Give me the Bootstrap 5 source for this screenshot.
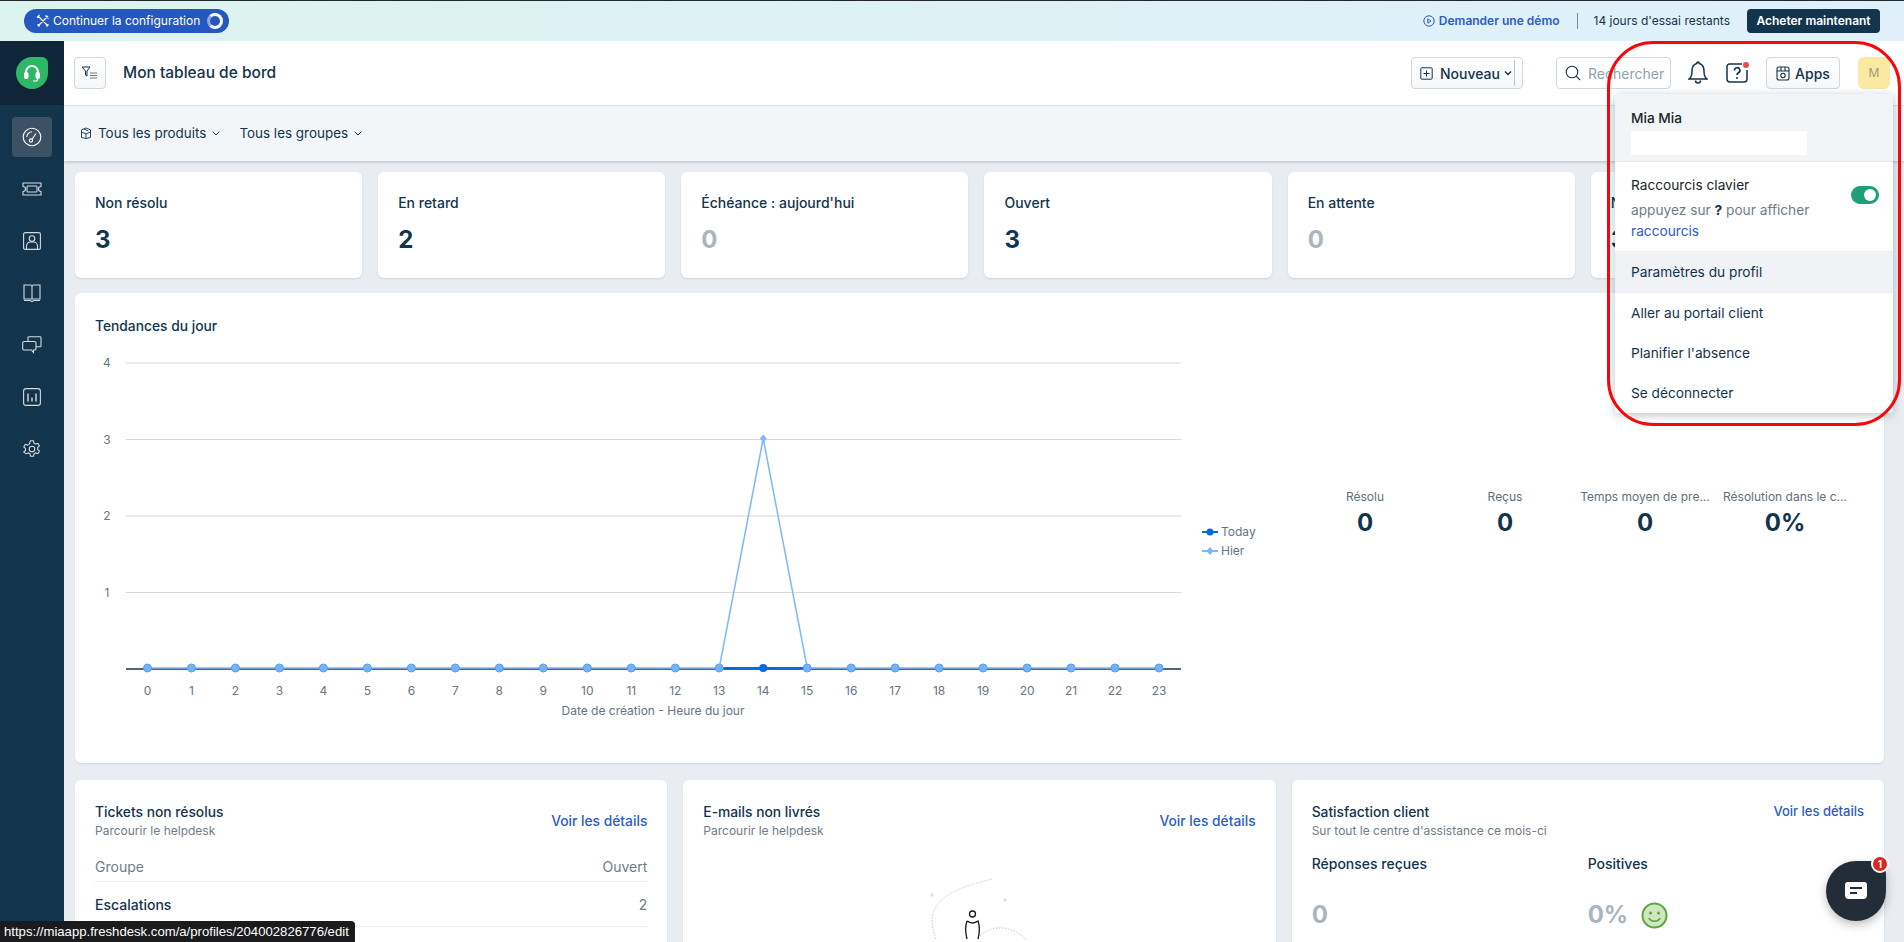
<!DOCTYPE html>
<html lang="fr">
<head>
    <meta charset="UTF-8">
    <title>Mon tableau de bord</title>
    <link href="https://cdn.jsdelivr.net/npm/bootstrap@5.3.3/dist/css/bootstrap.min.css" rel="stylesheet">
    <style>
        html, body { height: 942px; overflow: hidden; }
        body { font-family: Inter, "Liberation Sans", sans-serif; font-size: 14px; color: #12344d; background: #e9edf1; }

        /* bandeau d'essai */
        .trial-bar { height: 41px; border-top: 1px solid #23272b; background: linear-gradient(90deg, #dcf4ef, #dff0fb); padding: 0 24px; font-size: 12px; flex-shrink: 0; }
        .setup-pill { height: 24px; width: 205px; background: #2458bf; color: #fff; border-radius: 12px; padding-left: 12px; gap: 3px; }
        .setup-spin { width: 16px; height: 16px; border-radius: 50%; border: 3px solid #fff; border-left-color: #8fa9df; margin-left: 4px; }
        .demo-link { color: #2c5cc5; font-weight: 600; gap: 4px; text-decoration: none; }
        .trial-sep { width: 1px; height: 16px; background: #7b8a97; margin: 0 16px 0 17px; }
        .buy-btn { height: 24px; width: 133px; margin-left: 17px; padding: 0; background: #12344d; color: #fff; font-size: 12px; font-weight: 600; border-radius: 4px; border: 0; }

        /* barre laterale */
        .side-nav { width: 64px; background: #12344d; flex-shrink: 0; }
        .side-logo { height: 64px; background: #0f2538; }
        .logo-leaf { width: 32px; height: 32px; background: #2eb767; border-radius: 50% 6px 50% 50%; }
        .side-links { padding-top: 12px; gap: 12px; }
        .side-tile { width: 40px; height: 40px; border-radius: 4px; }
        .side-tile.on { background: #3b5166; }

        /* en-tete */
        .top-head { height: 65px; background: #fff; border-bottom: 1px solid #e4e9ee; padding: 0 14px 0 10px; flex-shrink: 0; }
        .ghost-btn { height: 32px; background: linear-gradient(#fff, #f5f7f9); border: 1px solid #cfd7df; border-radius: 4px; color: #12344d; }
        .filter-btn { width: 32px; }
        .page-title { font-size: 15.5px; font-weight: 500; margin: 1px 0 0 17px; }
        .new-btn { width: 112px; padding: 0 0 0 8px; gap: 7px; font-weight: 500; }
        .new-sep { width: 1px; height: 26px; background: #b9c4ce; margin-left: -5px; }
        .search-box { width: 115px; height: 32px; border: 1px solid #cfd7df; border-radius: 4px; margin-left: 33px; padding-left: 8px; gap: 7px; color: #92a2b1; background: #fff; }
        .help-dot { width: 6px; height: 6px; background: #ef4a4a; border-radius: 50%; position: absolute; top: 1px; right: 0; }
        .apps-btn { width: 74px; gap: 5px; font-weight: 500; margin-left: 17px; }
        .user-chip { width: 32px; height: 32px; background: #fbe9a3; color: #a19a78; font-size: 12px; border-radius: 6px; margin-left: 18px; }

        /* filtres */
        .filter-strip { height: 55px; background: #f3f6f9; box-shadow: 0 1px 3px rgba(18, 52, 77, .25); padding-left: 16px; flex-shrink: 0; position: relative; font-size: 13.45px; }
        .filter-pick { gap: 6px; }
        .filter-pick + .filter-pick { margin-left: 19px; }

        /* contenu */
        .dash-body { padding: 11px 20px 0 11px; overflow: hidden; flex: 1; min-height: 0; }
        .tiles-row { margin-right: -2px; }
        .tile-card, .chart-card, .panel-card { border: 0; border-radius: 6px; box-shadow: 0 1px 2px rgba(18, 52, 77, .12); }
        .tile-card { height: 106px; padding: 20px; }
        .tile-label { font-weight: 500; line-height: 22px; }
        .tile-num { font-size: 24px; font-weight: 700; line-height: 30px; margin-top: 11px; }
        .muted-num { color: #a9b5c0; }
        .chart-card { height: 470px; margin: 15px 0 17px; padding: 23px 20px 0; }
        .card-title-txt { font-weight: 500; line-height: 20px; font-size: 13.8px; margin: 0; }
        .chart-wrap { margin-top: 9px; }
        .chart-wrap text { font-family: Inter, "Liberation Sans", sans-serif; font-size: 12px; fill: #667581; }
        .stat-cell { width: 140px; text-align: center; padding-top: 152px; }
        .stat-name { font-size: 12px; color: #5f6f7c; line-height: 18px; white-space: nowrap; }
        .stat-val { font-size: 24px; font-weight: 700; line-height: 32px; margin-top: 1px; }
        .panel-card { height: 300px; padding: 21px 20px; }
        .panel-plain { padding-top: 22px; }
        .sub-txt { font-size: 12px; color: #6f7c87; line-height: 18px; }
        .see-link { color: #2c5cc5; font-weight: 500; text-decoration: none; font-size: 13.8px; }
        .panel-head { height: 40px; }
        .panel-row { height: 45px; border-bottom: 1px solid #ebeff3; color: #6f7c87; }
        .first-row { height: 31px; margin-top: 10px; }
        .row-name { color: #12344d; font-weight: 500; }
        .big-gray { font-size: 24px; font-weight: 700; color: #a9b5c0; line-height: 30px; }
        .csat-head { font-weight: 500; line-height: 21px; margin-top: 13px; }
        .csat-val { margin-top: 26px; gap: 13px; }
        .empty-art { display: block; margin: 34px auto 0; }

        /* menu du profil */
        .profile-menu { position: absolute; left: 1615px; top: 94px; width: 278px; padding: 0; margin: 0; border: 0; border-radius: 4px; font-size: 13.7px; box-shadow: 0 2px 10px rgba(18, 52, 77, .3); z-index: 20; overflow: visible; }
        .profile-menu::before { content: ""; position: absolute; top: -6px; right: 18px; border: 6px solid transparent; border-top: 0; border-bottom-color: #f1f5f8; }
        .menu-top { height: 68px; background: #f1f5f8; border-bottom: 1px solid #e4e9ee; padding: 13px 16px 0; border-radius: 4px 4px 0 0; }
        .menu-name { font-weight: 500; line-height: 22px; }
        .menu-mask { width: 176px; height: 24px; background: #fff; margin-top: 2px; }
        .menu-keys { height: 90px; padding: 13px 14px 0 16px; border-bottom: 1px solid #e9edf1; }
        .keys-note { color: #6f7c87; line-height: 21px; margin-top: 4px; width: 185px; }
        .keys-note b { color: #12344d; }
        .keys-note a { color: #2c5cc5; text-decoration: none; }
        .key-switch { margin: 11px 0 0; padding: 0; min-height: 0; }
        .key-switch .form-check-input { width: 28px; height: 18px; margin: 0; background-color: #1d9f78; border-color: #1d9f78; float: none; display: block; }
        .profile-menu .dropdown-item { height: 40px; line-height: 40px; padding: 0 16px; color: #12344d; }
        .profile-menu .dropdown-item.hovered { background: #f0f2f6; height: 41px; line-height: 41px; }

        .red-circle { position: absolute; left: 1607px; top: 41px; width: 294px; height: 385px; border: 3px solid #f5080c; border-radius: 46px; z-index: 30; pointer-events: none; }

        .chat-bubble { position: absolute; left: 1826px; top: 861px; width: 60px; height: 60px; background: #232d38; border-radius: 50% 14px 50% 50%; box-shadow: 0 4px 10px rgba(0, 0, 0, .25); z-index: 25; }
        .chat-count { position: absolute; right: -3px; top: -6px; width: 18px; height: 18px; border-radius: 50%; background: #e0241c; border: 2px solid #fff; color: #fff; font-size: 10px; font-weight: 700; line-height: 14px; text-align: center; }

        .status-link { position: absolute; left: 0; bottom: 0; height: 21px; width: 355px; background: #1b1b1d; color: #fff; font-family: "Liberation Sans", sans-serif; font-size: 13.15px; line-height: 21px; padding-left: 4px; border-radius: 0 4px 0 0; white-space: nowrap; z-index: 40; }
    </style>
</head>
<body>
    <div class="d-flex flex-column" style="height:942px">
        <!-- bandeau d'essai -->
        <div class="trial-bar d-flex align-items-center">
            <div class="setup-pill d-flex align-items-center">
                <svg width="14" height="14" viewBox="0 0 14 14" fill="none" stroke="#fff" stroke-width="1.2"><path d="M2 2l10 10M12 2L2 12M1 3.5L3.5 1M9.5 1.5l3 3M1.5 10.5l2 2M10.5 12.5l2-2"/></svg>
                <span>Continuer la configuration</span>
                <span class="setup-spin"></span>
            </div>
            <a href="#" class="demo-link d-flex align-items-center ms-auto">
                <svg width="12" height="12" viewBox="0 0 12 12" fill="none" stroke="#2c5cc5"><circle cx="6" cy="6" r="5.2"/><path d="M4.8 3.8L8 6 4.8 8.2z"/></svg>
                Demander une démo
            </a>
            <span class="trial-sep"></span>
            <span>14 jours d'essai restants</span>
            <button type="button" class="btn buy-btn">Acheter maintenant</button>
        </div>

        <div class="d-flex flex-grow-1" style="min-height:0">
            <!-- navigation -->
            <nav class="side-nav d-flex flex-column">
                <div class="side-logo d-flex align-items-center justify-content-center">
                    <span class="logo-leaf d-flex align-items-center justify-content-center">
                        <svg width="20" height="20" viewBox="0 0 20 20" fill="none" stroke="#fff" stroke-width="2"><path d="M4 12V9a6 6 0 0 1 12 0v3"/><rect x="3" y="10" width="2.5" height="5" rx="1" fill="#fff"/><rect x="14.5" y="10" width="2.5" height="5" rx="1" fill="#fff"/><path d="M15.5 15v1.5a1.5 1.5 0 0 1-1.5 1.5h-3" stroke-width="1.2"/></svg>
                    </span>
                </div>
                <div class="side-links d-flex flex-column align-items-center">
                    <span class="side-tile on d-flex align-items-center justify-content-center">
                        <svg width="20" height="20" viewBox="0 0 20 20" fill="none" stroke="#fff" stroke-width="1.1"><circle cx="10" cy="10" r="8.8"/><path d="M4.800 10a5.200 5.200 0 0 1 5.200-5.200"/><circle cx="9" cy="13.500" r="1.600"/><path d="M10 12.200L14 6.500"/></svg>
                    </span>
                    <span class="side-tile d-flex align-items-center justify-content-center">
                        <svg width="20" height="14" viewBox="0 0 20 14" fill="none" stroke="#d3dae0" stroke-width="1.1"><path d="M1 1h18v3.5a2.5 2.5 0 0 0 0 5V13H1V9.500a2.500 2.500 0 0 0 0-5z"/><rect x="5" y="4" width="10" height="6" rx="1"/></svg>
                    </span>
                    <span class="side-tile d-flex align-items-center justify-content-center">
                        <svg width="18" height="18" viewBox="0 0 18 18" fill="none" stroke="#d3dae0" stroke-width="1.1"><rect x=".6" y=".6" width="16.800" height="16.800" rx="1.500"/><circle cx="9" cy="6.500" r="2.800"/><path d="M3.500 17v-3a4 4 0 0 1 4-4h3a4 4 0 0 1 4 4v3"/></svg>
                    </span>
                    <span class="side-tile d-flex align-items-center justify-content-center">
                        <svg width="18" height="18" viewBox="0 0 18 18" fill="none" stroke="#d3dae0" stroke-width="1.1"><path d="M1 1h6.500A1.500 1.500 0 0 1 9 2.500V15H1zM17 1h-6.500A1.500 1.500 0 0 0 9 2.500V15h8z"/><path d="M1 16.500h6l2 1 2-1h6"/></svg>
                    </span>
                    <span class="side-tile d-flex align-items-center justify-content-center">
                        <svg width="20" height="18" viewBox="0 0 20 18" fill="none" stroke="#d3dae0" stroke-width="1.1"><path d="M6 5V1.500A.8.8 0 0 1 6.800 .7h11.400a.8.8 0 0 1 .8.8V10a.8.8 0 0 1-.8.8H14"/><path d="M2 5.500h10.500A1.500 1.500 0 0 1 14 7v5.500a1.500 1.500 0 0 1-1.500 1.500h-1v2.500L9.500 14H2A1.500 1.500 0 0 1 .7 12.500V7A1.500 1.500 0 0 1 2 5.500z"/></svg>
                    </span>
                    <span class="side-tile d-flex align-items-center justify-content-center">
                        <svg width="18" height="18" viewBox="0 0 18 18" fill="none" stroke="#d3dae0" stroke-width="1.1"><rect x=".6" y=".6" width="16.800" height="16.800" rx="2.500"/><path d="M5 5.500v8M9 9.500v4M13 5.500v8" stroke-width="1.400"/></svg>
                    </span>
                    <span class="side-tile d-flex align-items-center justify-content-center">
                        <svg width="18" height="18" viewBox="0 0 18 18" fill="none" stroke="#d3dae0" stroke-width="1.1"><circle cx="9" cy="9" r="2.800"/><path d="M7.500 .8h3l.5 2.300 1.700 1 2.200-.8 1.500 2.600-1.700 1.600v2l1.700 1.600-1.500 2.600-2.200-.8-1.700 1-.5 2.300h-3l-.5-2.300-1.700-1-2.200.8L.8 12.100l1.700-1.600v-2L.8 6.900l1.500-2.600 2.200.8 1.700-1z"/></svg>
                    </span>
                </div>
            </nav>

            <div class="d-flex flex-column flex-grow-1" style="min-width:0">
                <!-- en-tete -->
                <header class="top-head d-flex align-items-center">
                    <button type="button" class="ghost-btn filter-btn d-flex align-items-center justify-content-center p-0">
                        <svg width="18" height="14" viewBox="0 0 18 14" fill="none" stroke="#12344d" stroke-width="1"><path d="M1 1h8L6 5v5L4.500 9V5z"/><path d="M9 7h7M9 9.500h7M9 12h7" stroke="#6f7c87"/></svg>
                    </button>
                    <h1 class="page-title">Mon tableau de bord</h1>
                    <button type="button" class="ghost-btn new-btn d-flex align-items-center ms-auto">
                        <svg width="13" height="13" viewBox="0 0 13 13" fill="none" stroke="#12344d"><rect x=".8" y=".8" width="11.400" height="11.400" rx="1"/><path d="M6.500 3.500v6M3.500 6.500h6"/></svg>
                        <span>Nouveau</span>
                        <svg width="8" height="6" viewBox="0 0 8 6" fill="none" stroke="#12344d" stroke-width="1.400" style="margin-left:-3px"><path d="M1 1.500l3 3 3-3"/></svg>
                        <span class="new-sep"></span>
                    </button>
                    <div class="search-box d-flex align-items-center">
                        <svg width="16" height="16" viewBox="0 0 16 16" fill="none" stroke="#12344d" stroke-width="1.100"><circle cx="7" cy="7" r="5.800"/><path d="M11.200 11.200L15 15"/></svg>
                        <span>Rechercher</span>
                    </div>
                    <svg width="20" height="24" viewBox="0 0 20 24" fill="none" stroke="#12344d" stroke-width="1.500" style="margin-left:17px"><path d="M10 1a1.200 1.200 0 0 1 1.200 1.500C15 3.500 16 7 16 10c0 4 1.500 7 3 8H1c1.500-1 3-4 3-8 0-3 1-6.500 4.800-7.500A1.200 1.200 0 0 1 10 1z"/><path d="M7.500 19.500a2.500 2.500 0 0 0 5 0"/></svg>
                    <span class="position-relative d-inline-flex" style="margin-left:17px">
                        <svg width="24" height="24" viewBox="0 0 24 24" fill="none" stroke="#12344d" stroke-width="1.500"><path d="M17 3H4.500A2.500 2.500 0 0 0 2 5.500V18a3 3 0 0 0 3 3h14a3 3 0 0 0 3-3V9"/><path d="M9.500 9.500a2.700 2.700 0 1 1 4 2.300c-1 .6-1.500 1.200-1.500 2.200" stroke-width="1.700"/><circle cx="12" cy="17" r="1" fill="#12344d" stroke="none"/></svg>
                        <span class="help-dot"></span>
                    </span>
                    <button type="button" class="ghost-btn apps-btn d-flex align-items-center justify-content-center p-0">
                        <svg width="14" height="15" viewBox="0 0 14 15" fill="none" stroke="#12344d" stroke-width="1.100"><rect x="1" y="1" width="12" height="13" rx="2"/><path d="M1 5h12M5 1v4M9 1v4"/><circle cx="7" cy="9.500" r="2.200"/></svg>
                        <span>Apps</span>
                    </button>
                    <div class="user-chip d-flex align-items-center justify-content-center">M</div>
                </header>

                <!-- filtres -->
                <div class="filter-strip d-flex align-items-center">
                    <div class="filter-pick d-flex align-items-center">
                        <svg width="12" height="12" viewBox="0 0 12 12" fill="none" stroke="#12344d" stroke-width=".9"><path d="M6 1l4.500 1.800v2.200L6 6.800 1.500 5V2.800zM1.500 5v5.500L6 11.500V6.800M10.500 5v5.500L6 11.500"/><path d="M3.800 2L8.200 3.800"/></svg>
                        <span>Tous les produits</span>
                        <svg width="8" height="5" viewBox="0 0 8 5" fill="none" stroke="#12344d"><path d="M.7 .7L4 4 7.300 .7"/></svg>
                    </div>
                    <div class="filter-pick d-flex align-items-center">
                        <span>Tous les groupes</span>
                        <svg width="8" height="5" viewBox="0 0 8 5" fill="none" stroke="#12344d"><path d="M.7 .7L4 4 7.300 .7"/></svg>
                    </div>
                </div>

                <!-- contenu -->
                <main class="dash-body d-flex flex-column">
                    <div class="row row-cols-6 g-3 flex-shrink-0 tiles-row">
                        <div class="col"><div class="card tile-card"><div class="tile-label">Non résolu</div><div class="tile-num">3</div></div></div>
                        <div class="col"><div class="card tile-card"><div class="tile-label">En retard</div><div class="tile-num">2</div></div></div>
                        <div class="col"><div class="card tile-card"><div class="tile-label">Échéance : aujourd'hui</div><div class="tile-num muted-num">0</div></div></div>
                        <div class="col"><div class="card tile-card"><div class="tile-label">Ouvert</div><div class="tile-num">3</div></div></div>
                        <div class="col"><div class="card tile-card"><div class="tile-label">En attente</div><div class="tile-num muted-num">0</div></div></div>
                        <div class="col"><div class="card tile-card"><div class="tile-label">Non attribué</div><div class="tile-num">3</div></div></div>
                    </div>

                    <div class="card chart-card flex-shrink-0">
                        <h2 class="card-title-txt">Tendances du jour</h2>
                        <div class="d-flex">
                            <div class="chart-wrap">
                                <svg id="trendChart" width="1200" height="390" viewBox="95 345 1200 390"></svg>
                            </div>
                            <div class="d-flex">
                                <div class="stat-cell"><div class="stat-name">Résolu</div><div class="stat-val">0</div></div>
                                <div class="stat-cell"><div class="stat-name">Reçus</div><div class="stat-val">0</div></div>
                                <div class="stat-cell"><div class="stat-name">Temps moyen de pre...</div><div class="stat-val">0</div></div>
                                <div class="stat-cell"><div class="stat-name">Résolution dans le c...</div><div class="stat-val">0%</div></div>
                            </div>
                        </div>
                    </div>

                    <div class="row row-cols-3 g-3 flex-shrink-0">
                        <div class="col">
                            <div class="card panel-card">
                                <div class="panel-head d-flex justify-content-between align-items-center">
                                    <div><h3 class="card-title-txt">Tickets non résolus</h3><div class="sub-txt">Parcourir le helpdesk</div></div>
                                    <a href="#" class="see-link">Voir les détails</a>
                                </div>
                                <div class="panel-row first-row d-flex justify-content-between align-items-center"><span>Groupe</span><span>Ouvert</span></div>
                                <div class="panel-row d-flex justify-content-between align-items-center"><span class="row-name">Escalations</span><span>2</span></div>
                            </div>
                        </div>
                        <div class="col">
                            <div class="card panel-card">
                                <div class="panel-head d-flex justify-content-between align-items-center">
                                    <div><h3 class="card-title-txt">E-mails non livrés</h3><div class="sub-txt">Parcourir le helpdesk</div></div>
                                    <a href="#" class="see-link">Voir les détails</a>
                                </div>
                                <svg class="empty-art" width="100" height="80" viewBox="930 880 100 80" fill="none">
                                    <path d="M993 884C960 892 934 902 933 925c0 8 2 13 4 20" stroke="#c4cbd2" stroke-dasharray="1.500 1.500"/>
                                    <path d="M981 941c8-7 16-9 23-8 9 1 18 5 23 12" stroke="#c4cbd2" stroke-dasharray="1.500 1.500"/>
                                    <path d="M931 900h4M933 898v4" stroke="#d7dde3"/>
                                    <circle cx="1006" cy="905" r="1.800" fill="#d7dde3"/>
                                    <circle cx="973.500" cy="919" r="3" stroke="#12181f" stroke-width="1.300"/>
                                    <path d="M968 926c2 1 3 2 5.500 2s3.500-1 5.500-2c1.500 4 1.500 12 0 18M968 926c-1.500 4-1.500 12 0 18" stroke="#12181f" stroke-width="1.300"/>
                                </svg>
                            </div>
                        </div>
                        <div class="col">
                            <div class="card panel-card panel-plain">
                                <div class="d-flex justify-content-between align-items-start">
                                    <div><h3 class="card-title-txt">Satisfaction client</h3><div class="sub-txt">Sur tout le centre d'assistance ce mois-ci</div></div>
                                    <a href="#" class="see-link" style="font-size:13px">Voir les détails</a>
                                </div>
                                <div class="d-flex">
                                    <div style="width:276px">
                                        <div class="csat-head">Réponses reçues</div>
                                        <div class="csat-val d-flex align-items-center"><span class="big-gray">0</span></div>
                                    </div>
                                    <div>
                                        <div class="csat-head">Positives</div>
                                        <div class="csat-val d-flex align-items-center">
                                            <span class="big-gray">0%</span>
                                            <svg width="27" height="27" viewBox="0 0 27 27"><circle cx="13.500" cy="13.500" r="12" fill="#cfe6c3" stroke="#5ba83f" stroke-width="2"/><circle cx="9.500" cy="11" r="1.500" fill="#5ba83f"/><circle cx="17.500" cy="11" r="1.500" fill="#5ba83f"/><path d="M8 16.500c2.500 3.500 8.500 3.500 11 0" fill="none" stroke="#5ba83f" stroke-width="1.500" stroke-linecap="round"/></svg>
                                        </div>
                                    </div>
                                </div>
                            </div>
                        </div>
                    </div>
                </main>
            </div>
        </div>
    </div>

    <!-- menu du profil -->
    <div class="dropdown-menu show profile-menu">
        <div class="menu-top">
            <div class="menu-name">Mia Mia</div>
            <div class="menu-mask"></div>
        </div>
        <div class="menu-keys d-flex justify-content-between">
            <div>
                <div style="line-height:21px">Raccourcis clavier</div>
                <div class="keys-note">appuyez sur <b>?</b> pour afficher <a href="#">raccourcis</a></div>
            </div>
            <div class="form-check form-switch key-switch">
                <input class="form-check-input" type="checkbox" role="switch" checked aria-label="Raccourcis clavier">
            </div>
        </div>
        <a class="dropdown-item hovered" href="#">Paramètres du profil</a>
        <a class="dropdown-item" href="#">Aller au portail client</a>
        <a class="dropdown-item" href="#">Planifier l'absence</a>
        <a class="dropdown-item" href="#">Se déconnecter</a>
    </div>
    <div class="red-circle"></div>

    <div class="chat-bubble d-flex align-items-center justify-content-center">
        <svg width="24" height="20" viewBox="0 0 24 20"><path d="M4 1h16a3 3 0 0 1 3 3v10a4 4 0 0 1-4 4H5a4 4 0 0 1-4-4V4a3 3 0 0 1 3-3z" fill="#fff"/><path d="M6 7h12M6 12h7" stroke="#232d38" stroke-width="2"/></svg>
        <span class="chat-count">1</span>
    </div>

    <div class="status-link">https://miaapp.freshdesk.com/a/profiles/204002826776/edit</div>

    <script>
        // Courbe du jour : dessinee a partir des donnees par heure
        const svg = document.getElementById("trendChart");
        const NS = "http://www.w3.org/2000/svg";
        const xOf = h => 147.500 + 43.98 * h;
        const yOf = v => 668 - 76.5 * v;

        function add(tag, attrs, text) {
            const el = document.createElementNS(NS, tag);
            Object.keys(attrs).forEach(k => el.setAttribute(k, attrs[k]));
            if (text !== undefined) el.textContent = text;
            svg.appendChild(el);
            return el;
        }

        [1, 2, 3, 4].forEach(v => {
            add("line", {x1: 126, x2: 1181, y1: yOf(v) + 1, y2: yOf(v) + 1, stroke: "#d5dae0"});
            add("text", {x: 107, y: yOf(v) + 5, "text-anchor": "middle"}, v);
        });
        add("line", {x1: 126, x2: 1181, y1: 669, y2: 669, stroke: "#12344d", "stroke-width": 1.5});

        const hier = [];
        for (let h = 0; h < 24; h++) hier.push([xOf(h), yOf(h === 14 ? 3 : 0)]);
        add("line", {x1: xOf(13), x2: xOf(15), y1: 668, y2: 668, stroke: "#0469e3", "stroke-width": 2});
        add("polyline", {points: hier.map(p => p.join(",")).join(" "), fill: "none", stroke: "#7ab8ff", "stroke-width": 1.5});
        add("circle", {cx: xOf(14), cy: 668, r: 4, fill: "#0469e3"});
        hier.forEach((p, h) => {
            if (h === 14) {
                add("path", {d: `M${p[0]} ${p[1] - 4}l3.500 4-3.500 4-3.500-4z`, fill: "#7ab8ff"});
            } else {
                add("circle", {cx: p[0], cy: p[1], r: 4, fill: "#72b3ff", stroke: "#5a9fee"});
            }
            add("text", {x: p[0], y: 695, "text-anchor": "middle"}, h);
        });
        add("text", {x: 653, y: 715, "text-anchor": "middle"}, "Date de création - Heure du jour");

        // Legende
        add("line", {x1: 1202, x2: 1218, y1: 532, y2: 532, stroke: "#0469e3", "stroke-width": 2});
        add("circle", {cx: 1210, cy: 532, r: 3.500, fill: "#0469e3"});
        add("text", {x: 1221, y: 536}, "Today");
        add("line", {x1: 1202, x2: 1218, y1: 551, y2: 551, stroke: "#7ab8ff", "stroke-width": 2});
        add("path", {d: "M1210 547l3.500 4-3.500 4-3.500-4z", fill: "#7ab8ff"});
        add("text", {x: 1221, y: 555}, "Hier");
    </script>
    <script src="https://cdn.jsdelivr.net/npm/bootstrap@5.3.3/dist/js/bootstrap.bundle.min.js"></script>
</body>
</html>
